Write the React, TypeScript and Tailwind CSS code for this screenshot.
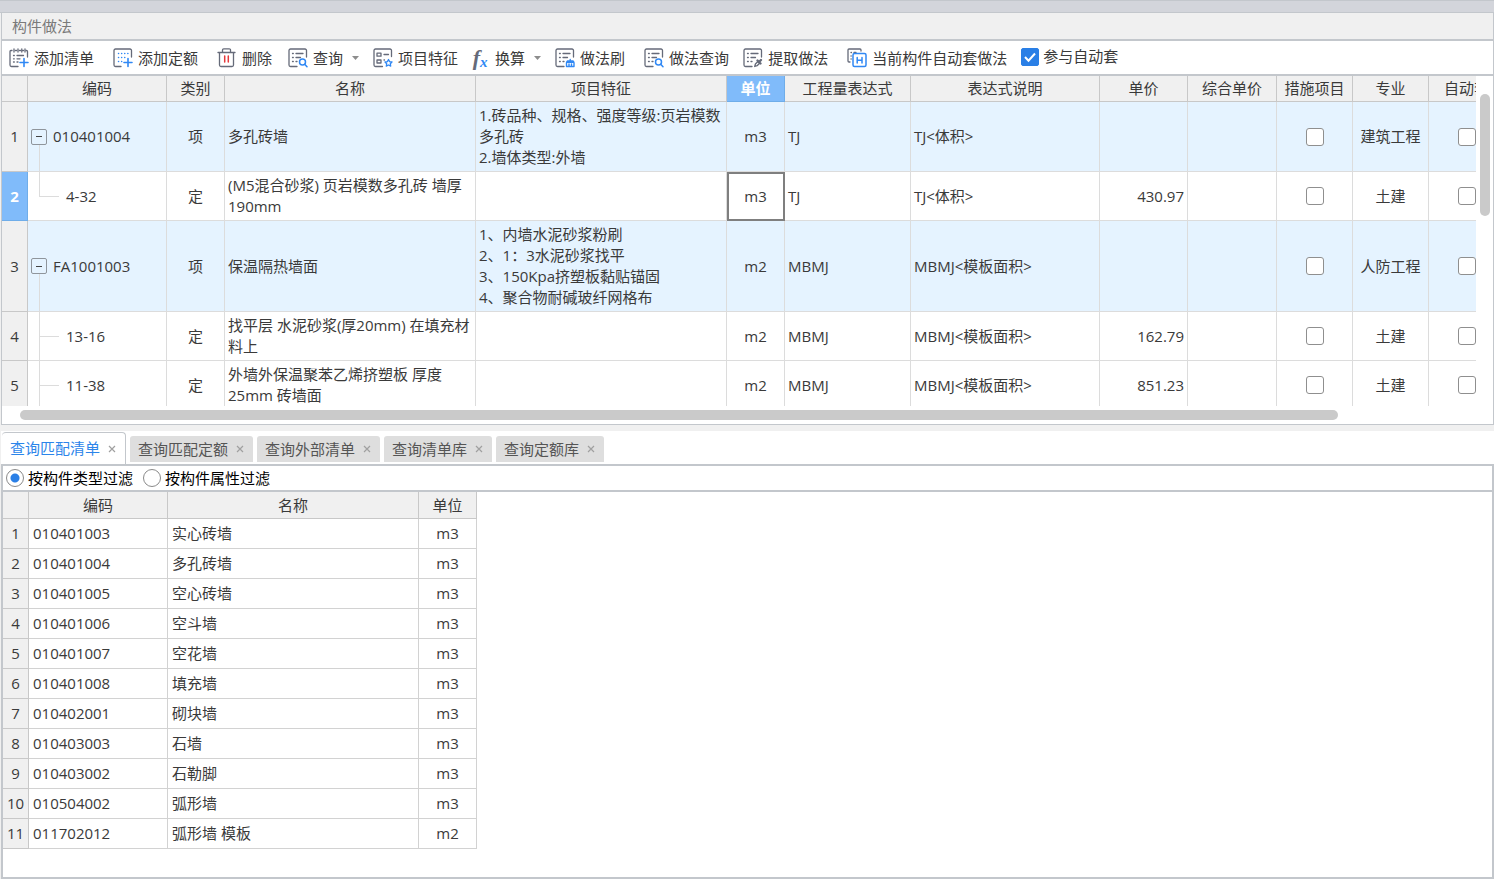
import React, { useState } from 'react';
import clsx from 'clsx';

const INK = '#656a79';
const BLUE = '#3088f4';

function Icon({ children }: { children: React.ReactNode }) {
  return (
    <svg
      width="20"
      height="20"
      viewBox="0 0 20 20"
      fill="none"
      stroke={INK}
      strokeWidth="1.3"
      strokeLinecap="round"
      strokeLinejoin="round"
      className="shrink-0"
    >
      {children}
    </svg>
  );
}

function Sheet() {
  return (
    <>
      <path d="M18.500 9V2.500a1.500 1.500 0 0 0-1.500-1.500H2.500A1.500 1.500 0 0 0 1 2.500v14.500a1.500 1.500 0 0 0 1.500 1.500H9" />
      <path d="M4.500 5.500h.8M8 5.500h7M4.500 9.500h.8M8 9.500h4.500M4.500 13.500h.8M8 13.500h1" />
    </>
  );
}

const AddListIcon = () => (
  <Icon>
    <path d="M18.500 9V3.500a1 1 0 0 0-1-1h-.500M3 2.500H2a1 1 0 0 0-1 1V17a1.500 1.500 0 0 0 1.500 1.500H9" />
    <path d="M6.500 2.500h1M10.500 2.500h1M14 2.500h.5M5 1v3M9 1v3M12.800 1v3M16 1v3" />
    <path d="M4.500 7.500h.8M8 7.500h6.500M4.500 10.800h.8M8 10.800h3M4.500 14h.8M8 14h1" />
    <path d="M15 10.500v8M11 14.500h8" stroke={BLUE} strokeWidth="1.600" />
  </Icon>
);

const AddQuotaIcon = () => (
  <Icon>
    <path d="M18.500 9V2.500A1.500 1.500 0 0 0 17 1H2.500A1.500 1.500 0 0 0 1 2.500V17a1.500 1.500 0 0 0 1.500 1.500H8" />
    <path
      d="M5.500 5.500h.1M8.600 5.500h.1M11.700 5.500h.1M14.800 5.500h.1M5.500 9.500h.1M8.600 9.500h.1M11.700 9.500h.1M5.500 13.500h.1M8.600 13.500h.1"
      stroke={BLUE}
      strokeWidth="1.500"
    />
    <path d="M15 10.500v8M11 14.500h8" stroke={BLUE} strokeWidth="1.600" />
  </Icon>
);

const TrashIcon = () => (
  <Icon>
    <path d="M1 4.500h17M5.500 4.500V2A1.200 1.200 0 0 1 6.700.8h5.600A1.200 1.200 0 0 1 13.500 2v2.500M2.500 4.500v12.500a1.500 1.500 0 0 0 1.500 1.500h11a1.500 1.500 0 0 0 1.500-1.500V4.500" />
    <path d="M7.700 8v6M11.300 8v6" stroke="#e5383b" strokeWidth="1.500" />
  </Icon>
);

const QueryIcon = () => (
  <Icon>
    <Sheet />
    <circle cx="14.500" cy="14" r="3" stroke={BLUE} strokeWidth="1.500" />
    <path d="m16.700 16.200 2.300 2.500" stroke={BLUE} strokeWidth="1.500" />
  </Icon>
);

const FeatureIcon = () => (
  <Icon>
    <path d="M18.500 8.500V2.500A1.500 1.500 0 0 0 17 1H2.500A1.500 1.500 0 0 0 1 2.500V17a1.500 1.500 0 0 0 1.500 1.500H9.500" />
    <path d="M4 5.200h4v3H4zM4 12h4v3H4zM11 6.500h4.500M11 12h.5" />
    <path
      d="m15.500 11.500 1.100 2.100 2.400.4-1.700 1.700.4 2.400-2.200-1.100-2.200 1.100.4-2.400-1.700-1.700 2.400-.4z"
      stroke={BLUE}
    />
  </Icon>
);

const BrushIcon = () => (
  <Icon>
    <Sheet />
    <path
      d="M11.500 18.500v-4.300h7.500v4.300zM11.500 14.500l1-1.500h5.500l1 1.500M15.200 13v-1.500M14 18v-2M16.500 18v-2"
      stroke={BLUE}
      strokeWidth="1.400"
    />
  </Icon>
);

const ExtractIcon = () => (
  <Icon>
    <Sheet />
    <path d="m11.700 18.500.7-2.500 2.500-2.500 1.700 1.700-2.500 2.500z" />
    <path d="m14.500 12.500 3 3M16.500 13.500l1.500-1.500" strokeWidth="2.400" />
  </Icon>
);

const AutoIcon = () => (
  <Icon>
    <path d="M14 3V2a1 1 0 0 0-1-1H2a1 1 0 0 0-1 1v11a1 1 0 0 0 1 1h1M4 4.500h.5M7 4.500h2M4 8h.2M4 11h.2" />
    <rect x="6" y="5.500" width="13" height="13" rx="1.500" stroke={BLUE} strokeWidth="1.500" />
    <path d="M10.200 9.500v5.500M15 9.500v5.500M10.200 12.200H15" stroke={BLUE} strokeWidth="1.500" />
  </Icon>
);

function FormulaIcon() {
  return (
    <span className="flex w-5 shrink-0 items-center justify-center font-['Liberation_Serif',serif] text-[22px] leading-5 font-bold italic text-[#656a79]">
      f<span className="mt-2 text-[15px] text-[#3088f4]">x</span>
    </span>
  );
}

function Caret() {
  return (
    <svg width="7" height="4" viewBox="0 0 7 4" fill="#8d8d8d" className="ml-1">
      <path d="M0 0h7L3.500 4z" />
    </svg>
  );
}

interface ToolProps {
  icon: React.ReactNode;
  label: string;
  menu?: boolean;
  className?: string;
}

function Tool({ icon, label, menu, className }: ToolProps) {
  return (
    <button type="button" className={clsx('flex shrink-0 items-center gap-[5px]', className)}>
      {icon}
      <span className="pt-[2px]">{label}</span>
      {menu && <Caret />}
    </button>
  );
}

interface Item {
  code: string;
  kind: string;
  name: string;
  feature: string[];
  unit: string;
  expr: string;
  exprNote: string;
  price: string;
  major: string;
  parent?: boolean;
  lastChild?: boolean;
}

const items: Item[] = [
  {
    code: '010401004',
    kind: '项',
    name: '多孔砖墙',
    feature: ['1.砖品种、规格、强度等级:页岩模数多孔砖', '2.墙体类型:外墙'],
    unit: 'm3',
    expr: 'TJ',
    exprNote: 'TJ<体积>',
    price: '',
    major: '建筑工程',
    parent: true,
  },
  {
    code: '4-32',
    kind: '定',
    name: '(M5混合砂浆) 页岩模数多孔砖 墙厚190mm',
    feature: [],
    unit: 'm3',
    expr: 'TJ',
    exprNote: 'TJ<体积>',
    price: '430.97',
    major: '土建',
    lastChild: true,
  },
  {
    code: 'FA1001003',
    kind: '项',
    name: '保温隔热墙面',
    feature: ['1、内墙水泥砂浆粉刷', '2、1：3水泥砂浆找平', '3、150Kpa挤塑板黏贴锚固', '4、聚合物耐碱玻纤网格布'],
    unit: 'm2',
    expr: 'MBMJ',
    exprNote: 'MBMJ<模板面积>',
    price: '',
    major: '人防工程',
    parent: true,
  },
  {
    code: '13-16',
    kind: '定',
    name: '找平层 水泥砂浆(厚20mm) 在填充材料上',
    feature: [],
    unit: 'm2',
    expr: 'MBMJ',
    exprNote: 'MBMJ<模板面积>',
    price: '162.79',
    major: '土建',
  },
  {
    code: '11-38',
    kind: '定',
    name: '外墙外保温聚苯乙烯挤塑板 厚度25mm 砖墙面',
    feature: [],
    unit: 'm2',
    expr: 'MBMJ',
    exprNote: 'MBMJ<模板面积>',
    price: '851.23',
    major: '土建',
  },
];

const columns = [
  { title: '编码', width: 'w-[139px]' },
  { title: '类别', width: 'w-[58px]' },
  { title: '名称', width: 'w-[251px]' },
  { title: '项目特征', width: 'w-[251px]' },
  { title: '单位', width: 'w-[58px]' },
  { title: '工程量表达式', width: 'w-[126px]' },
  { title: '表达式说明', width: 'w-[189px]' },
  { title: '单价', width: 'w-[88px]' },
  { title: '综合单价', width: 'w-[89px]' },
  { title: '措施项目', width: 'w-[76px]' },
  { title: '专业', width: 'w-[76px]' },
  { title: '自动套', width: 'w-[76px]' },
];

const matches = [
  ['010401003', '实心砖墙', 'm3'],
  ['010401004', '多孔砖墙', 'm3'],
  ['010401005', '空心砖墙', 'm3'],
  ['010401006', '空斗墙', 'm3'],
  ['010401007', '空花墙', 'm3'],
  ['010401008', '填充墙', 'm3'],
  ['010402001', '砌块墙', 'm3'],
  ['010403003', '石墙', 'm3'],
  ['010403002', '石勒脚', 'm3'],
  ['010504002', '弧形墙', 'm3'],
  ['011702012', '弧形墙 模板', 'm2'],
];

const tabs = ['查询匹配清单', '查询匹配定额', '查询外部清单', '查询清单库', '查询定额库'];

const headCell = 'border-r border-b border-[#c8c8c8] bg-[#f0f0f0] p-0 font-normal';
const cell = 'border-r border-b border-[#dcdcdc] py-[3px]';

function CheckCell({ label }: { label: string }) {
  return (
    <td className={cell}>
      <input
        type="checkbox"
        aria-label={label}
        className="mx-auto block size-[18px] appearance-none rounded-[3px] border border-[#8f8f8f] bg-white checked:bg-[#2a7fe6]"
      />
    </td>
  );
}

function CodeCell({ item }: { item: Item }) {
  return (
    <td className={clsx(cell, 'relative')}>
      {item.parent ? (
        <>
          <span className="absolute top-1/2 bottom-0 left-[11px] w-px bg-[#dcdcdc]" />
          <div className="relative flex items-center gap-[6px] pl-[3px]">
            <button
              type="button"
              aria-label="折叠"
              className="flex size-4 items-center justify-center rounded-[2px] border border-[#8f959c] bg-[#e5f3ff]"
            >
              <span className="h-px w-[6px] bg-[#444]" />
            </button>
            {item.code}
          </div>
        </>
      ) : (
        <>
          <span
            className={clsx('absolute top-0 left-[11px] w-px bg-[#dcdcdc]', item.lastChild ? 'h-1/2' : 'h-full')}
          />
          <span className="absolute top-1/2 left-[11px] h-px w-5 bg-[#dcdcdc]" />
          <div className="pl-[38px]">{item.code}</div>
        </>
      )}
    </td>
  );
}

export default function App() {
  const [activeTab, setActiveTab] = useState(0);
  const [filter, setFilter] = useState('type');
  const selectedRow = 1;

  return (
    <div className="flex min-h-screen flex-col bg-[#f0f0f0] font-['Open_Sans','Noto_Sans_CJK_SC',sans-serif] text-[15px] leading-[21px] text-[#3a3a3a]">
      <div className="h-[13px] border-y border-[#c3c7cc] bg-[#d3d5db]" />

      {/* 构件做法 */}
      <section className="ml-px flex flex-col border-r border-b border-l border-[#c3c7cc] bg-white">
        <h1 className="flex h-[28px] items-center border-b-2 border-[#c3c7cc] bg-[#f0f0f0] pl-[10px] text-[#7a7a7a]">
          构件做法
        </h1>

        <div className="flex h-[35px] items-center overflow-hidden border-b-2 border-[#c3c7cc] pl-[7px] whitespace-nowrap">
          <Tool icon={<AddListIcon />} label="添加清单" className="mr-[19px]" />
          <Tool icon={<AddQuotaIcon />} label="添加定额" className="mr-[19px]" />
          <Tool icon={<TrashIcon />} label="删除" className="mr-4" />
          <Tool icon={<QueryIcon />} label="查询" menu className="mr-[14px]" />
          <Tool icon={<FeatureIcon />} label="项目特征" className="mr-3" />
          <Tool icon={<FormulaIcon />} label="换算" menu className="mr-[14px]" />
          <Tool icon={<BrushIcon />} label="做法刷" className="mr-[19px]" />
          <Tool icon={<QueryIcon />} label="做法查询" className="mr-[14px]" />
          <Tool icon={<ExtractIcon />} label="提取做法" className="mr-[19px]" />
          <Tool icon={<AutoIcon />} label="当前构件自动套做法" className="mr-[14px]" />
          <label className="mb-[2px] flex shrink-0 items-center gap-1">
            <span className="grid size-[18px] place-items-center">
              <input
                type="checkbox"
                defaultChecked
                className="peer col-start-1 row-start-1 size-[18px] appearance-none rounded-[2px] border border-[#8f8f8f] checked:border-[#2a7fe6] checked:bg-[#2a7fe6]"
              />
              <svg
                width="14"
                height="14"
                viewBox="0 0 14 14"
                fill="none"
                stroke="#fff"
                strokeWidth="2"
                className="pointer-events-none col-start-1 row-start-1 hidden peer-checked:block"
              >
                <path d="M2 7l3.500 3.700L12 3.500" />
              </svg>
            </span>
            参与自动套
          </label>
        </div>

        <div className="flex">
          <div className="h-[330px] min-w-0 flex-1 overflow-hidden">
            <table className="w-[1503px] table-fixed border-separate border-spacing-0">
              <thead>
                <tr className="h-[26px]">
                  <th className={clsx(headCell, 'w-[26px]')} aria-label="序号" />
                  {columns.map((col) => (
                    <th
                      key={col.title}
                      className={clsx(
                        'border-r border-b p-0 whitespace-nowrap',
                        col.width,
                        col.title === '单位'
                          ? 'border-[#6fade9] bg-[#80bbfa] font-bold text-white'
                          : 'border-[#c8c8c8] bg-[#f0f0f0] font-normal'
                      )}
                    >
                      {col.title}
                    </th>
                  ))}
                </tr>
              </thead>
              <tbody>
                {items.map((item, i) => (
                  <tr key={item.code} className={item.parent ? 'bg-[#e5f3ff]' : 'bg-white'}>
                    <th
                      className={clsx(
                        'border-r border-b p-0',
                        i === selectedRow
                          ? 'border-[#6fade9] bg-[#80bbfa] font-bold text-white'
                          : 'border-[#c8c8c8] bg-[#f0f0f0] font-normal'
                      )}
                    >
                      {i + 1}
                    </th>
                    <CodeCell item={item} />
                    <td className={clsx(cell, 'text-center')}>{item.kind}</td>
                    <td className={clsx(cell, 'pl-[3px]')}>{item.name}</td>
                    <td className={clsx(cell, 'pl-[3px]')}>
                      {item.feature.map((line) => (
                        <div key={line}>{line}</div>
                      ))}
                    </td>
                    <td
                      className={clsx(
                        cell,
                        'text-center',
                        i === selectedRow && 'outline-2 -outline-offset-2 outline-[#7f7f7f]'
                      )}
                    >
                      {item.unit}
                    </td>
                    <td className={clsx(cell, 'pl-[3px]')}>{item.expr}</td>
                    <td className={clsx(cell, 'pl-[3px]')}>{item.exprNote}</td>
                    <td className={clsx(cell, 'pr-[3px] text-right')}>{item.price}</td>
                    <td className={cell} />
                    <CheckCell label={`措施项目 ${item.code}`} />
                    <td className={clsx(cell, 'text-center')}>{item.major}</td>
                    <CheckCell label={`自动套 ${item.code}`} />
                  </tr>
                ))}
              </tbody>
            </table>
          </div>
          <div className="w-[17px] shrink-0 px-1 pt-[18px]">
            <div className="h-[122px] w-[10px] rounded-full bg-[#cacaca]" />
          </div>
        </div>
        <div className="h-[18px] pt-1 pr-[155px] pl-[18px]">
          <div className="h-[10px] rounded-full bg-[#cacaca]" />
        </div>
      </section>

      {/* 查询 */}
      <section className="mt-[6px] ml-px flex flex-1 flex-col bg-white">
        <div role="tablist" className="flex h-[33px] items-end gap-1 pl-px">
          {tabs.map((tab, i) => (
            <div
              key={tab}
              className={clsx(
                'flex shrink-0 items-center gap-2 pr-[9px] pl-2',
                i === activeTab
                  ? 'h-8 rounded-t-[4px] border-t border-r border-[#c3c7cc] text-[#2b85ea]'
                  : 'mb-[2px] h-[26px] rounded-t-[3px] bg-[#dedede] text-[#555]'
              )}
            >
              <button type="button" role="tab" aria-selected={i === activeTab} onClick={() => setActiveTab(i)}>
                {tab}
              </button>
              <button type="button" aria-label={`关闭${tab}`} className="text-[#a0a0a0]">
                <svg width="8" height="8" viewBox="0 0 8 8" stroke="currentColor" strokeWidth="1.200">
                  <path d="M1 1l6 6M7 1L1 7" />
                </svg>
              </button>
            </div>
          ))}
        </div>

        <div className="flex flex-1 flex-col border-2 border-[#c3c7cc]">
          <div className="flex h-[26px] items-center gap-[10px] border-b-2 border-[#c3c7cc] pl-[3px] text-black">
            {[
              ['type', '按构件类型过滤'],
              ['attr', '按构件属性过滤'],
            ].map(([value, label]) => (
              <label key={value} className="flex items-center gap-1">
                <input
                  type="radio"
                  name="filter"
                  checked={filter === value}
                  onChange={() => setFilter(value)}
                  className="size-[18px] appearance-none rounded-full border border-[#8a8a8a] bg-white checked:bg-[radial-gradient(circle,#2a7fe6_4px,#fff_5px)]"
                />
                {label}
              </label>
            ))}
          </div>

          <table className="mb-6 w-[474px] table-fixed border-separate border-spacing-0">
            <thead>
              <tr className="h-[27px]">
                <th className={clsx(headCell, 'w-[26px]')} aria-label="序号" />
                <th className={clsx(headCell, 'w-[139px]')}>编码</th>
                <th className={clsx(headCell, 'w-[251px]')}>名称</th>
                <th className={clsx(headCell, 'w-[58px]')}>单位</th>
              </tr>
            </thead>
            <tbody>
              {matches.map(([code, name, unit], i) => (
                <tr key={code} className="h-[30px]">
                  <th className={headCell}>{i + 1}</th>
                  <td className="border-r border-b border-[#d2d2d2] pl-1">{code}</td>
                  <td className="border-r border-b border-[#d2d2d2] pl-1">{name}</td>
                  <td className="border-r border-b border-[#d2d2d2] text-center">{unit}</td>
                </tr>
              ))}
            </tbody>
          </table>
        </div>
      </section>
    </div>
  );
}
